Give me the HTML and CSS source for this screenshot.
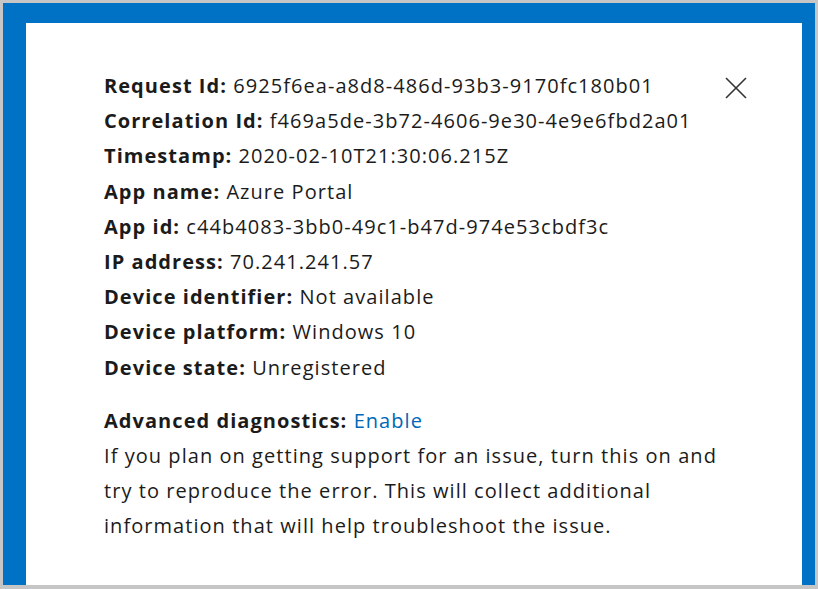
FILE: index.html
```html
<!DOCTYPE html>
<html>
<head>
<meta charset="utf-8">
<link rel="stylesheet" href="styles.css">
</head>
<body>
<div class="frame">
  <div class="blue">
    <div class="panel">
      <button class="close" aria-label="Close">
        <svg width="22" height="22" viewBox="0 0 22 22"><path d="M1 1L21 21M21 1L1 21" stroke="#333" stroke-width="1.6" fill="none"/></svg>
      </button>
      <div class="details">
        <div><b>Request Id:</b> 6925f6ea-a8d8-486d-93b3-9170fc180b01</div>
        <div><b>Correlation Id:</b> f469a5de-3b72-4606-9e30-4e9e6fbd2a01</div>
        <div><b>Timestamp:</b> 2020-02-10T21:30:06.215Z</div>
        <div><b>App name:</b> Azure Portal</div>
        <div><b>App id:</b> c44b4083-3bb0-49c1-b47d-974e53cbdf3c</div>
        <div><b>IP address:</b> 70.241.241.57</div>
        <div><b>Device identifier:</b> Not available</div>
        <div><b>Device platform:</b> Windows 10</div>
        <div><b>Device state:</b> Unregistered</div>
      </div>
      <div class="diag">
        <div><b>Advanced diagnostics:</b> <a href="#" class="link">Enable</a></div>
        <p class="desc">If you plan on getting support for an issue, turn this on and try to reproduce the error. This will collect additional information that will help troubleshoot the issue.</p>
      </div>
    </div>
  </div>
</div>
</body>
</html>
```
FILE: styles.css
```css
html, body {
  margin: 0;
  padding: 0;
  background: #c6c6c6;
  height: 100%;
  overflow: hidden;
}
.frame {
  padding: 3px 3px 0 3px;
  height: 585px;
  box-sizing: border-box;
}
.blue {
  background: #0072c6;
  padding: 20px 13px 0 23px;
  height: 100%;
  box-sizing: border-box;
}
.panel {
  position: relative;
  background: #fff;
  height: 100%;
  box-sizing: border-box;
  padding: 45px 0 0 78px;
  font-family: "Open Sans", "Noto Sans", sans-serif;
  font-size: 20px;
  letter-spacing: 1.05px;
  line-height: 35.2px;
  color: #1b1b1b;
}
.panel b {
  font-weight: 700;
}
.close {
  position: absolute;
  top: 54px;
  right: 55px;
  background: none;
  border: 0;
  padding: 0;
  width: 22px;
  height: 22px;
  cursor: pointer;
}
.close svg { display: block; }
.diag {
  margin-top: 18px;
}
.link {
  color: #0067b8;
  text-decoration: none;
}
.desc {
  margin: 0;
  width: 628px;
}
```
